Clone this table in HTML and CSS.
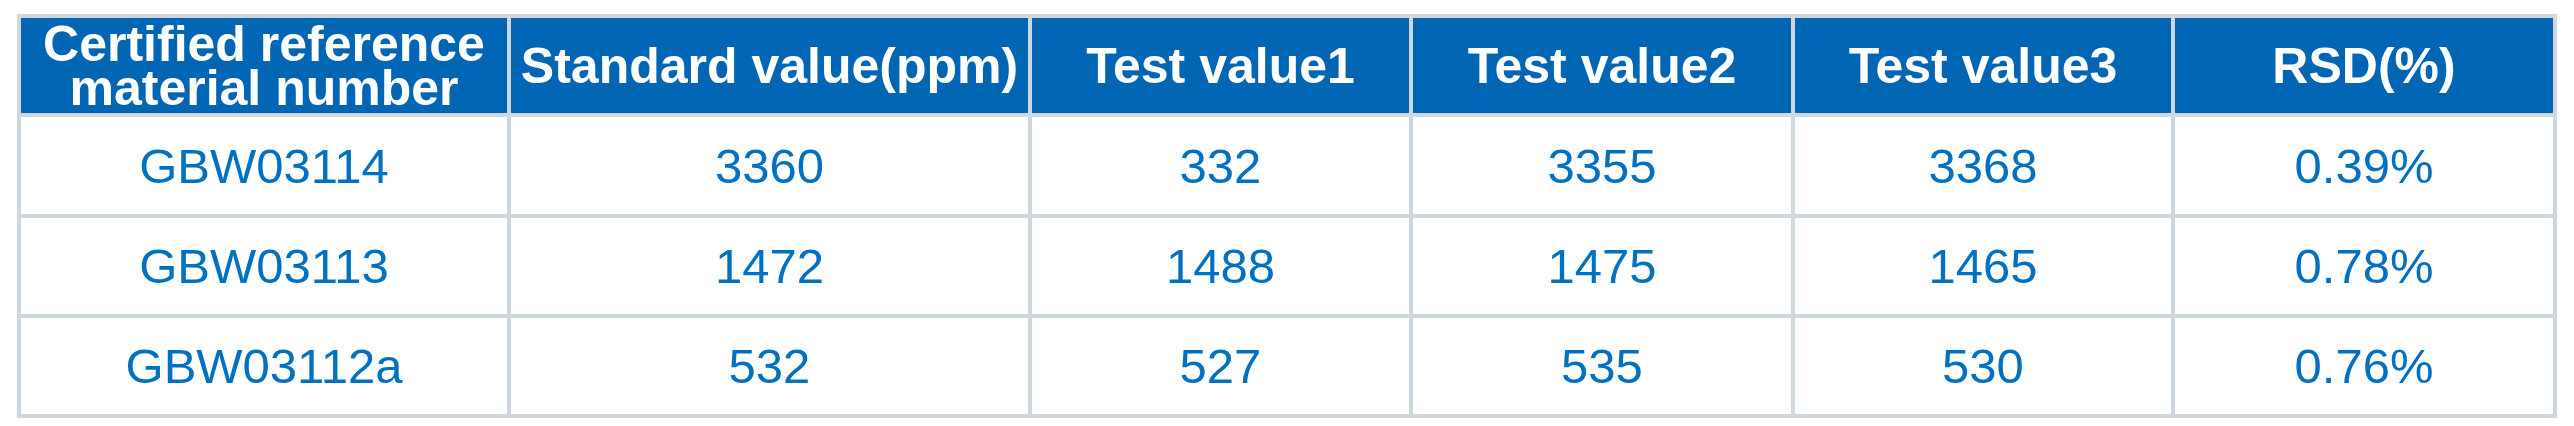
FILE: index.html
```html
<!DOCTYPE html>
<html lang="en">
<head>
<meta charset="utf-8">
<title>Certified reference material test results</title>
<link rel="stylesheet" href="styles.css">
</head>
<body>
<div class="page">
  <table class="results">
    <colgroup>
      <col class="c1">
      <col class="c2">
      <col class="c3">
      <col class="c4">
      <col class="c5">
      <col class="c6">
    </colgroup>
    <thead>
      <tr class="head">
        <th class="two">Certified reference material number</th>
        <th>Standard value(ppm)</th>
        <th>Test value1</th>
        <th>Test value2</th>
        <th>Test value3</th>
        <th>RSD(%)</th>
      </tr>
    </thead>
    <tbody>
      <tr class="r1">
        <td>GBW03114</td>
        <td>3360</td>
        <td>332</td>
        <td>3355</td>
        <td>3368</td>
        <td>0.39%</td>
      </tr>
      <tr class="r2">
        <td>GBW03113</td>
        <td>1472</td>
        <td>1488</td>
        <td>1475</td>
        <td>1465</td>
        <td>0.78%</td>
      </tr>
      <tr class="r3">
        <td>GBW03112a</td>
        <td>532</td>
        <td>527</td>
        <td>535</td>
        <td>530</td>
        <td>0.76%</td>
      </tr>
    </tbody>
  </table>
</div>
</body>
</html>
```
FILE: styles.css
```css
html, body {
  margin: 0;
  padding: 0;
  background: #ffffff;
}

.page {
  padding: 14px 0 0 17px;
}

.results {
  border-collapse: separate;
  border-spacing: 4px;
  background: #cfd8df;
  table-layout: fixed;
  width: 2540px;
  font-family: "Liberation Sans", Arial, sans-serif;
  font-size: 49px;
}

.c1 { width: 486px; }
.c2 { width: 517px; }
.c3 { width: 377px; }
.c4 { width: 378px; }
.c5 { width: 376px; }
.c6 { width: 378px; }

.results th,
.results td {
  padding: 0;
  text-align: center;
  vertical-align: middle;
  white-space: nowrap;
}

.results th {
  background: #0066b4;
  color: #ffffff;
  font-weight: bold;
  font-size: 50px;
  height: 95px;
  line-height: 44px;
}

.results th.two {
  white-space: normal;
}

.results td {
  background: #ffffff;
  color: #0070c0;
  font-weight: normal;
  line-height: 56px;
}

.r1 td { height: 97px; }
.r2 td { height: 96px; }
.r3 td { height: 96px; }
```
